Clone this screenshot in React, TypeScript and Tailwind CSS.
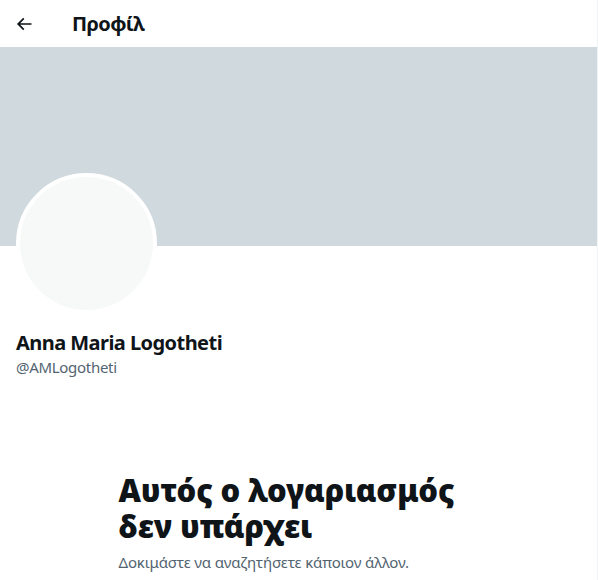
import React from "react";

export default function App() {
  return (
    <div
      className="w-[598px] min-h-[580px] bg-white border-r border-[#eff3f4] text-[#0f1419]"
      style={{ fontFamily: '"Noto Sans", "Liberation Sans", sans-serif' }}
    >
      <div className="h-[47px] flex items-center">
        <div className="w-[72px] flex items-center pl-[14px]">
          <svg viewBox="0 0 24 24" className="w-5 h-5 fill-[#0f1419]">
            <path d="M7.414 13l5.043 5.04-1.414 1.42L3.586 12l7.457-7.46 1.414 1.42L7.414 11H21v2H7.414z" />
          </svg>
        </div>
        <h2 className="text-[20px] leading-6 font-bold tracking-[-0.6px]">Προφίλ</h2>
      </div>
      <div className="h-[199px] bg-[#cfd9de]" />
      <div className="px-4">
        <div className="-mt-[73px] w-[141px] h-[141px] rounded-full border-4 border-white bg-[#f7f9f9]" />
        <div className="mt-[17px] text-[20px] leading-6 font-bold tracking-[-0.55px]">Anna Maria Logotheti</div>
        <div className="mt-0.5 text-[15px] leading-5 text-[#536471] tracking-[-0.3px]">@AMLogotheti</div>
      </div>
      <div className="mx-auto w-[400px] px-5 mt-[95px]">
        <h1 className="text-[31px] leading-[36px] font-black tracking-[-0.2px]">Αυτός ο λογαριασμός δεν υπάρχει</h1>
        <p className="mt-2 text-[15px] leading-5 text-[#536471] tracking-[-0.15px]">Δοκιμάστε να αναζητήσετε κάποιον άλλον.</p>
      </div>
    </div>
  );
}
